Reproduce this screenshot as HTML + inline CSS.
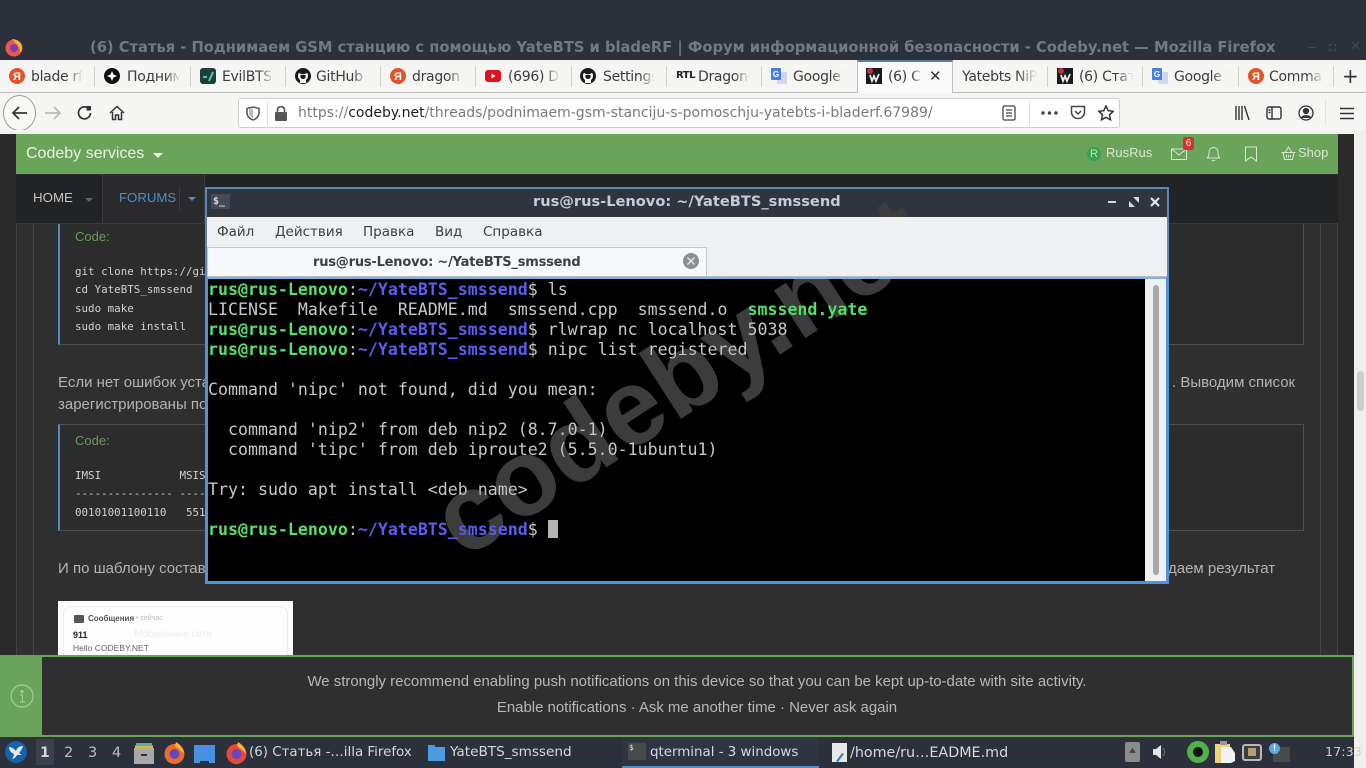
<!DOCTYPE html>
<html lang="ru"><head><meta charset="utf-8"><title>Codeby</title>
<style>
*{box-sizing:border-box}
html,body{margin:0;padding:0;width:1366px;height:768px;overflow:hidden;background:#2f343f}
body{position:relative;font-family:"DejaVu Sans","Noto Sans CJK SC",sans-serif}
.a,.t,.tab,svg.i{position:absolute}
.t{white-space:nowrap;line-height:1}
.ar{font-family:"Liberation Sans","Noto Sans CJK SC",sans-serif}
.tab{top:68px;height:18px;line-height:18px;font-size:14px;letter-spacing:-.3px;color:#3b3b3b;white-space:nowrap;overflow:hidden;-webkit-mask-image:linear-gradient(90deg,#000 70%,transparent)}
.sep{position:absolute;top:66px;width:1px;height:21px;background:#cfcfcd}
.fav{position:absolute;top:68px;width:16px;height:16px}
.mono{font-family:"DejaVu Sans Mono",monospace}
.code{font-size:10.85px;color:#d2d2d2}
.p{font-size:15px;color:#b4b4b4}
.term{position:absolute;left:208px;font:16.6px/20px "DejaVu Sans Mono",monospace;color:#c8c8c8;white-space:pre;height:20px}
.g{color:#55e06a;font-weight:bold}.b{color:#5c5cf0;font-weight:bold}
.mn{top:226px;font-size:13.5px;color:#3a3e46}
.tb{top:746px;font-size:14.5px;color:#d3dae3}
</style></head><body>

<!-- Firefox titlebar -->
<div class="a" style="left:0;top:0;width:1366px;height:60px;background:#2b303b"></div>
<svg class="i" style="left:4px;top:37px" width="20" height="20" viewBox="0 0 20 20"><circle cx="10" cy="11" r="8.500" fill="#e85a50"/><path d="M8 2c4 0 10 3 10 9 0 2-1 4-2 5 1-6-4-9-8-14z" fill="#f9b233"/><circle cx="10" cy="11" r="4" fill="#7b3fa8"/></svg>
<div class="t" style="left:90px;top:41px;font-size:14.7px;font-weight:bold;color:#737883" id="ti">(6) Статья - Поднимаем GSM станцию с помощью YateBTS и bladeRF | Форум информационной безопасности - Codeby.net — Mozilla Firefox</div>
<div class="a" style="left:1308px;top:47px;width:8px;height:1px;background:#444953"></div>
<div class="a" style="left:1329px;top:44px;width:7px;height:7px;border:1px dashed #444953"></div>
<div class="t" style="left:1350px;top:40px;font-size:13px;color:#444953">✕</div>

<!-- tab strip -->
<div class="a" style="left:0;top:60px;width:1366px;height:33px;background:#f5f5f4;border-bottom:1px solid #bdbdbb"></div>
<div class="sep" style="left:94px"></div><div class="sep" style="left:190px"></div><div class="sep" style="left:285px"></div><div class="sep" style="left:380px"></div><div class="sep" style="left:475px"></div><div class="sep" style="left:571px"></div><div class="sep" style="left:666px"></div><div class="sep" style="left:761px"></div><div class="sep" style="left:1047px"></div><div class="sep" style="left:1142px"></div><div class="sep" style="left:1238px"></div><div class="sep" style="left:1333px"></div>

<div class="a" style="left:857px;top:60px;width:96px;height:34px;background:#fafafa;border-left:1px solid #bdbdbb;border-right:1px solid #bdbdbb;border-top:2px solid #5a7ea8"></div>

<svg class="fav" style="left:9px" viewBox="0 0 16 16"><circle cx="8" cy="8" r="8" fill="#e2552b"/><text x="8" y="12" font-size="11" font-weight="bold" text-anchor="middle" fill="#fff" font-family="Liberation Sans">Я</text></svg>
<svg class="fav" style="left:104px" viewBox="0 0 16 16"><circle cx="8" cy="8" r="8" fill="#111"/><path d="M8 3l1.5 3.5L13 8l-3.500 1.500L8 13 6.500 9.500 3 8l3.500-1.500z" fill="#fff"/></svg>
<svg class="fav" style="left:200px" viewBox="0 0 16 16"><rect width="16" height="16" rx="3" fill="#1e3d3f"/><path d="M3 9h4M9 13l4-9" stroke="#4fd0a0" stroke-width="2"/></svg>
<svg class="fav" style="left:295px" viewBox="0 0 16 16"><circle cx="8" cy="8" r="8" fill="#1b1b1b"/><path d="M5 15v-3c-1-1-2-2-2-4s.500-3 1-3 2 1 2 1h4s1.500-1 2-1 1 1 1 3-1 3-2 4v3z" fill="#f5f5f4"/><path d="M5.500 7.500c0-1 5-1 5 0 .5 2-.5 3.500-2.500 3.500s-3-1.500-2.500-3.500z" fill="#1b1b1b"/></svg>
<svg class="fav" style="left:390px" viewBox="0 0 16 16"><circle cx="8" cy="8" r="8" fill="#e2552b"/><text x="8" y="12" font-size="11" font-weight="bold" text-anchor="middle" fill="#fff" font-family="Liberation Sans">Я</text></svg>
<svg class="fav" style="left:485px" viewBox="0 0 16 16"><rect y="2" width="16" height="12" rx="3" fill="#e0121b"/><path d="M6.500 5.500v5l4-2.500z" fill="#fff"/></svg>
<svg class="fav" style="left:580px" viewBox="0 0 16 16"><circle cx="8" cy="8" r="8" fill="#1b1b1b"/><path d="M5 15v-3c-1-1-2-2-2-4s.500-3 1-3 2 1 2 1h4s1.500-1 2-1 1 1 1 3-1 3-2 4v3z" fill="#f5f5f4"/><path d="M5.500 7.500c0-1 5-1 5 0 .5 2-.5 3.500-2.500 3.500s-3-1.500-2.500-3.500z" fill="#1b1b1b"/></svg>
<div class="t" style="left:676px;top:71px;font-size:10px;font-weight:bold;color:#222;letter-spacing:-.5px">RTL</div>
<svg class="fav" style="left:771px" viewBox="0 0 16 16"><rect x="6" y="4" width="10" height="12" fill="#cfd8e8"/><rect width="10" height="12" rx="1" fill="#4a7ee0"/><text x="5" y="9" font-size="8" font-weight="bold" text-anchor="middle" fill="#fff" font-family="Liberation Sans">G</text></svg>
<svg class="fav" style="left:866px" viewBox="0 0 16 16"><rect width="16" height="16" fill="#1a1a1a"/><circle cx="4" cy="3" r="3" fill="#c0333a"/><path d="M4 7l2 6 2-5 2 5 3-7" stroke="#eee" stroke-width="1.800" fill="none"/></svg>
<svg class="fav" style="left:1057px" viewBox="0 0 16 16"><rect width="16" height="16" fill="#1a1a1a"/><circle cx="4" cy="3" r="3" fill="#c0333a"/><path d="M4 7l2 6 2-5 2 5 3-7" stroke="#eee" stroke-width="1.800" fill="none"/></svg>
<svg class="fav" style="left:1152px" viewBox="0 0 16 16"><rect x="6" y="4" width="10" height="12" fill="#cfd8e8"/><rect width="10" height="12" rx="1" fill="#4a7ee0"/><text x="5" y="9" font-size="8" font-weight="bold" text-anchor="middle" fill="#fff" font-family="Liberation Sans">G</text></svg>
<svg class="fav" style="left:1248px" viewBox="0 0 16 16"><circle cx="8" cy="8" r="8" fill="#e2552b"/><text x="8" y="12" font-size="11" font-weight="bold" text-anchor="middle" fill="#fff" font-family="Liberation Sans">Я</text></svg>

<div class="tab" style="left:31px;width:52px">blade rf</div>
<div class="tab" style="left:127px;width:54px">Поднимаем</div>
<div class="tab" style="left:222px;width:52px">EvilBTS -</div>
<div class="tab" style="left:316px;width:52px">GitHub - x</div>
<div class="tab" style="left:412px;width:52px">dragon os</div>
<div class="tab" style="left:508px;width:52px">(696) Dragon</div>
<div class="tab" style="left:603px;width:52px">Settings</div>
<div class="tab" style="left:698px;width:52px">DragonOS</div>
<div class="tab" style="left:793px;width:54px">Google Translate</div>
<div class="tab" style="left:888px;width:34px">(6) Статья</div>
<div class="t" style="left:929px;top:69px;font-size:15px;color:#333">✕</div>
<div class="tab" style="left:962px;width:76px">Yatebts NiPC</div>
<div class="tab" style="left:1079px;width:54px">(6) Статья</div>
<div class="tab" style="left:1174px;width:54px">Google Translate</div>
<div class="tab" style="left:1269px;width:54px">Command</div>
<div class="t" style="left:1342px;top:66px;font-size:20px;color:#333">+</div>

<!-- nav bar -->
<div class="a" style="left:0;top:93px;width:1366px;height:37px;background:#f5f5f4"></div>
<div class="a" style="left:3px;top:95px;width:33px;height:36px;border:1px solid #9a9a9a;border-radius:50%;background:#f8f8f7"></div>
<svg class="i" style="left:11px;top:105px" width="18" height="16" viewBox="0 0 18 16" fill="none" stroke="#333" stroke-width="1.700"><path d="M16 8H2M8 2L2 8l6 6"/></svg>
<svg class="i" style="left:44px;top:105px" width="18" height="16" viewBox="0 0 18 16" fill="none" stroke="#b8b8b6" stroke-width="1.700"><path d="M1 8h15M10 2l6 6-6 6"/></svg>
<svg class="i" style="left:77px;top:105px" width="16" height="16" viewBox="0 0 16 16" fill="none" stroke="#333" stroke-width="1.700"><path d="M13.500 8A6 6 0 1 1 11 3"/><path d="M9.500 1h4.500v4.500H9.500z" fill="#333" stroke="none"/></svg>
<svg class="i" style="left:109px;top:105px" width="16" height="16" viewBox="0 0 16 16" fill="none" stroke="#333" stroke-width="1.500"><path d="M1 8l7-6.500L15 8M3.500 7v7.500h3V10h3v4.500h3V7"/></svg>
<div class="a" style="left:238px;top:98px;width:882px;height:30px;background:#fff;border:1px solid #cfcfcd;border-radius:3px"></div>
<svg class="i" style="left:246px;top:106px" width="14" height="15" viewBox="0 0 14 15" fill="none" stroke="#555" stroke-width="1.500"><path d="M1 2.500L7 1l6 1.500V7c0 3.500-3 6-6 7-3-1-6-3.500-6-7z"/><path d="M7 2.500V12.500C5 11.500 3 9.500 3 7V3.500z" fill="#555" stroke="none" opacity=".4"/></svg>
<div class="a" style="left:267px;top:101px;width:1px;height:24px;background:#dcdcda"></div>
<svg class="i" style="left:275px;top:106px" width="12" height="15" viewBox="0 0 12 15"><rect y="6" width="12" height="9" rx="1" fill="#555"/><path d="M2.500 7V4a3.500 3.500 0 0 1 7 0v3" stroke="#555" stroke-width="1.700" fill="none"/></svg>
<div class="t" id="url" style="left:298px;top:106px;font-size:14px;color:#7a7a7a"><span>https://</span><span style="color:#1d1d1d">codeby.net</span><span>/threads/podnimaem-gsm-stanciju-s-pomoschju-yatebts-i-bladerf.67989/</span></div>
<svg class="i" style="left:1002px;top:105px" width="14" height="16" viewBox="0 0 14 16" fill="none" stroke="#444" stroke-width="1.300"><rect x="1" y="1" width="12" height="14" rx="1.500"/><path d="M4 5h6M4 8h6M4 11h6"/></svg>
<div class="a" style="left:1029px;top:101px;width:1px;height:24px;background:#dcdcda"></div>
<svg class="i" style="left:1041px;top:111px" width="17" height="4" viewBox="0 0 17 4" fill="#444"><circle cx="2" cy="2" r="1.700"/><circle cx="8.500" cy="2" r="1.700"/><circle cx="15" cy="2" r="1.700"/></svg>
<svg class="i" style="left:1070px;top:105px" width="16" height="15" viewBox="0 0 16 15" fill="none" stroke="#444" stroke-width="1.500"><path d="M1.500 1.500h13V7a6.500 6.500 0 0 1-13 0z"/><path d="M5 6l3 3 3-3"/></svg>
<svg class="i" style="left:1098px;top:105px" width="16" height="16" viewBox="0 0 16 16" fill="none" stroke="#333" stroke-width="1.500"><path d="M8 1l2.200 4.700 5 .6-3.700 3.500 1 5L8 12.300 3.500 14.800l1-5L.8 6.300l5-.6z"/></svg>
<svg class="i" style="left:1234px;top:105px" width="16" height="16" viewBox="0 0 16 16" fill="none" stroke="#333" stroke-width="1.400"><path d="M2 1v14M5 1v14M8 1v14M10.500 1l4.500 14"/></svg>
<svg class="i" style="left:1266px;top:106px" width="16" height="14" viewBox="0 0 16 14" fill="none" stroke="#333" stroke-width="1.400"><rect x="1" y="1" width="14" height="12" rx="2"/><path d="M6 1v12"/><path d="M2.500 4h2M2.500 6.500h2" /></svg>
<svg class="i" style="left:1298px;top:105px" width="16" height="16" viewBox="0 0 16 16" fill="none" stroke="#333" stroke-width="1.300"><circle cx="8" cy="8" r="7"/><circle cx="8" cy="6" r="2.500" fill="#333"/><path d="M3.500 13c1-3 8-3 9 0" fill="#333"/></svg>
<div class="a" style="left:1325px;top:99px;width:1px;height:27px;background:#e3e3e1"></div>
<svg class="i" style="left:1340px;top:107px" width="14" height="13" viewBox="0 0 14 13" stroke="#333" stroke-width="1.600"><path d="M0 1.500h14M0 6.500h14M0 11.500h14"/></svg>

<!-- page -->
<div class="a" style="left:0;top:130px;width:1354px;height:607px;background:#2f2f2f"></div>
<div class="a" style="left:0;top:130px;width:1366px;height:4px;background:#f5f3ef"></div>
<div class="a" style="left:1354px;top:130px;width:12px;height:638px;background:#f1efeb"></div>
<div class="a" style="left:1357px;top:371px;width:7px;height:40px;background:#cfcdc9;border-radius:4px"></div>
<div class="a" style="left:0;top:134px;width:16px;height:522px;background:#2a2a2a"></div>
<div class="a" style="left:1338px;top:134px;width:16px;height:522px;background:#2a2a2a"></div>
<div class="a" style="left:16px;top:223px;width:1px;height:433px;background:#444"></div>
<div class="a" style="left:33px;top:223px;width:1px;height:433px;background:#464646"></div>
<div class="a" style="left:1320px;top:223px;width:1px;height:433px;background:#464646"></div>
<div class="a" style="left:1337px;top:223px;width:1px;height:433px;background:#444"></div>
<div class="a" style="left:16px;top:134px;width:1322px;height:40px;background:#6aa35a"></div>
<div class="t ar" style="left:26px;top:146px;font-size:16px;color:#eaf3e6">Codeby services</div>
<div class="a" style="left:153px;top:153px;border:5px solid transparent;border-top:5px solid #eaf3e6;border-bottom:0"></div>
<div class="a ar" style="left:1087px;top:147px;width:14px;height:14px;border-radius:50%;background:#3f9e52;color:#a6f0b4;font-size:11px;line-height:14px;text-align:center">R</div>
<div class="t ar" style="left:1106px;top:146px;font-size:13px;color:#d9e9d3">RusRus</div>
<svg class="i" style="left:1171px;top:147px" width="17" height="14" viewBox="0 0 17 14" fill="none" stroke="#dbe9d5" stroke-width="1"><rect x=".5" y="2" width="15" height="10.500"/><path d="M.5 2L8 8l7.500-6"/></svg>
<div class="a ar" style="left:1183px;top:137px;width:11px;height:13px;background:#d13333;border-radius:2px;color:#f3d9d9;font-size:10px;line-height:13px;text-align:center">6</div>
<svg class="i" style="left:1206px;top:145px" width="15" height="17" viewBox="0 0 15 17" fill="none" stroke="#dbe9d5" stroke-width="1"><path d="M1 13c2-1 2-4 2-6a4.500 4.500 0 0 1 9 0c0 2 0 5 2 6zM6 15c.5 1 2.500 1 3 0"/></svg>
<svg class="i" style="left:1244px;top:146px" width="14" height="16" viewBox="0 0 14 16" fill="none" stroke="#dbe9d5" stroke-width="1"><path d="M1.500 1h11v14L7 11l-5.500 4z"/></svg>
<svg class="i" style="left:1281px;top:146px" width="15" height="15" viewBox="0 0 15 15" fill="none" stroke="#dbe9d5" stroke-width="1"><path d="M.5 6.500h14M2 6.500l1.500 7h8l1.500-7M4 6.500L7.500 1 11 6.500M5.500 9v2.500M7.500 9v2.500M9.500 9v2.500"/></svg>
<div class="t ar" style="left:1298px;top:146px;font-size:13px;color:#d9e9d3">Shop</div>

<!-- site nav -->
<div class="a" style="left:16px;top:174px;width:1322px;height:50px;background:#222325;border-bottom:1px solid #3a3a3a;border-top:1px solid #2f2f2f"></div>
<div class="a" style="left:102px;top:175px;width:103px;height:48px;background:#2a2a2c;border-left:1px solid #3c3c3c;border-right:1px solid #3c3c3c"></div>
<div class="t ar" style="left:33px;top:191px;font-size:13.3px;color:#c4c4c4">HOME</div>
<div class="a" style="left:85px;top:198px;border:4px solid transparent;border-top:4px solid #666;border-bottom:0"></div>
<div class="t ar" style="left:119px;top:191px;font-size:13.2px;color:#4f8ec4">FORUMS</div>
<div class="a" style="left:179px;top:187px;width:1px;height:24px;background:#3c3c3c"></div>
<div class="a" style="left:188px;top:197px;border:4px solid transparent;border-top:4px solid #4f8ec4;border-bottom:0"></div>

<!-- blocks -->
<div class="a" style="left:58px;top:224px;width:1246px;height:121px;background:#2c2c2c;border:1px solid #505050;border-top:0;border-left:2px solid #4f8ec4"></div>
<div class="t ar" style="left:75px;top:230px;font-size:13px;color:#6a9a5c">Code:</div>
<div class="t mono code" style="left:75px;top:267px">git clone https://github.com/</div>
<div class="t mono code" style="left:75px;top:285px">cd YateBTS_smssend</div>
<div class="t mono code" style="left:75px;top:304px">sudo make</div>
<div class="t mono code" style="left:75px;top:322px">sudo make install</div>
<div class="t ar p" style="left:58px;top:375px">Если нет ошибок установки</div>
<div class="t ar p" style="left:1172px;top:375px">. Выводим список</div>
<div class="t ar p" style="left:58px;top:397px">зарегистрированы пользователи</div>
<div class="a" style="left:58px;top:424px;width:1246px;height:107px;background:#2c2c2c;border:1px solid #505050;border-left:2px solid #4f8ec4"></div>
<div class="t ar" style="left:75px;top:434px;font-size:13px;color:#6a9a5c">Code:</div>
<div class="t mono code" style="left:75px;top:471px;white-space:pre">IMSI            MSISDN</div>
<div class="t mono code" style="left:75px;top:489px;white-space:pre">--------------- ------</div>
<div class="t mono code" style="left:75px;top:508px;white-space:pre">00101001100110   55100</div>
<div class="t ar p" style="left:58px;top:561px">И по шаблону составляем</div>
<div class="t ar p" style="left:1168px;top:561px">даем результат</div>

<!-- image -->
<div class="a" style="left:58px;top:601px;width:235px;height:55px;background:#fdfdfd;overflow:hidden">
  <div class="a" style="left:5px;top:5px;width:225px;height:60px;border:1px solid #eaeaea;border-radius:8px"></div>
  <div class="a" style="left:16px;top:14px;width:10px;height:8px;background:#555;border-radius:1px"></div>
  <div class="t ar" style="left:30px;top:14px;font-size:8px;font-weight:bold;color:#555">Сообщения</div>
  <div class="t ar" style="left:78px;top:14px;font-size:7px;color:#bbb">• сейчас</div>
  <div class="t ar" style="left:76px;top:29px;font-size:10px;color:#eee">Мобильные сети</div>
  <div class="t ar" style="left:15px;top:30px;font-size:9px;font-weight:bold;color:#222">911</div>
  <div class="t ar" style="left:15px;top:43px;font-size:8.500px;color:#666">Hello CODEBY.NET</div>
</div>

<!-- notification -->
<div class="a" style="left:0;top:655px;width:1354px;height:82px;background:#2f2f2f;border:2px solid #6aa35a"></div>
<div class="a" style="left:0;top:655px;width:42px;height:82px;background:#6aa35a"></div>
<svg class="i" style="left:10px;top:684px" width="24" height="24" viewBox="0 0 24 24" fill="none" stroke="#a5cd99" stroke-width="1.200"><circle cx="12" cy="12" r="11"/><circle cx="12" cy="7.500" r="1" fill="#a5cd99"/><path d="M10 11h2.500v7M10 18h5"/></svg>
<div class="t ar" style="left:0;width:1394px;text-align:center;top:675px;font-size:14.95px;color:#b8b8b8">We strongly recommend enabling push notifications on this device so that you can be kept up-to-date with site activity.</div>
<div class="t ar" style="left:0;width:1394px;text-align:center;top:701px;font-size:14.95px;color:#b8b8b8">Enable notifications · Ask me another time · Never ask again</div>

<!-- terminal window -->
<div class="a" style="left:205px;top:187px;width:964px;height:397px;background:#eff0f2;border:2px solid #5a86b8"></div>
<div class="a" style="left:207px;top:189px;width:960px;height:28px;background:#2f343f"></div>
<div class="a mono" style="left:211px;top:194px;width:19px;height:15px;background:#444a55;color:#d3dae3;font-size:10px;line-height:15px;padding-left:2px;font-weight:bold">$_</div>
<div class="t" style="left:533px;top:195px;font-size:14.6px;font-weight:bold;color:#c5ccd6">rus@rus-Lenovo: ~/YateBTS_smssend</div>
<div class="a" style="left:1108px;top:201px;width:8px;height:2px;background:#d3dae3"></div>
<svg class="i" style="left:1129px;top:197px" width="10" height="10" viewBox="0 0 10 10" fill="#d3dae3"><path d="M10 0v6L4 0zM0 10V4l6 6z"/></svg>
<svg class="i" style="left:1150px;top:197px" width="10" height="10" viewBox="0 0 10 10" stroke="#e4e8ee" stroke-width="2.200"><path d="M1 1l8 8M9 1l-8 8"/></svg>
<div class="t mn" style="left:217px">Файл</div><div class="t mn" style="left:275px">Действия</div><div class="t mn" style="left:363px">Правка</div><div class="t mn" style="left:435px">Вид</div><div class="t mn" style="left:483px">Справка</div>
<div class="a" style="left:207px;top:247px;width:500px;height:30px;background:#f7f8f9;border:1px solid #c6c9cc;border-bottom:0"></div>
<div class="a" style="left:207px;top:276px;width:960px;height:1px;background:#b8bcc0"></div>
<div class="t" style="left:313px;top:256px;font-size:13px;font-weight:bold;color:#3a3e46;letter-spacing:-.2px">rus@rus-Lenovo: ~/YateBTS_smssend</div>
<div class="a" style="left:683px;top:253px;width:16px;height:16px;border-radius:50%;background:#8a8d92"></div>
<svg class="i" style="left:687px;top:257px" width="8" height="8" viewBox="0 0 8 8" stroke="#f0f0f0" stroke-width="1.300"><path d="M.5.5l7 7M7.500.5l-7 7"/></svg>

<div class="a" style="left:205px;top:277px;width:964px;height:2px;background:#7fb2e6"></div>
<div class="a" style="left:208px;top:279px;width:937px;height:302px;background:#000"></div>
<div class="a" style="left:1145px;top:279px;width:21px;height:302px;background:#eff1f2"></div>
<div class="a" style="left:1153px;top:285px;width:6px;height:290px;background:#a9a9a9;border-radius:3px"></div>
<div class="a" style="left:205px;top:277px;width:3px;height:307px;background:#4f94d8"></div>
<div class="a" style="left:1166px;top:277px;width:3px;height:307px;background:#4f94d8"></div>
<div class="a" style="left:205px;top:581px;width:964px;height:3px;background:#4f94d8"></div>

<div class="term" style="top:280px"><span class="g">rus@rus-Lenovo</span>:<span class="b">~/YateBTS_smssend</span>$ ls</div>
<div class="term" style="top:300px">LICENSE  Makefile  README.md  smssend.cpp  smssend.o  <span class="g">smssend.yate</span></div>
<div class="term" style="top:320px"><span class="g">rus@rus-Lenovo</span>:<span class="b">~/YateBTS_smssend</span>$ rlwrap nc localhost 5038</div>
<div class="term" style="top:340px"><span class="g">rus@rus-Lenovo</span>:<span class="b">~/YateBTS_smssend</span>$ nipc list registered</div>
<div class="term" style="top:380px">Command 'nipc' not found, did you mean:</div>
<div class="term" style="top:420px">  command 'nip2' from deb nip2 (8.7.0-1)</div>
<div class="term" style="top:440px">  command 'tipc' from deb iproute2 (5.5.0-1ubuntu1)</div>
<div class="term" style="top:480px">Try: sudo apt install &lt;deb name&gt;</div>
<div class="term" style="top:520px"><span class="g">rus@rus-Lenovo</span>:<span class="b">~/YateBTS_smssend</span>$ </div>
<div class="a" style="left:548px;top:520px;width:10px;height:18px;background:#b2b2b2"></div>

<!-- watermark -->
<div class="t ar" style="left:398px;top:322px;font-size:108px;font-weight:bold;color:#3c3c3c;mix-blend-mode:lighten;transform:rotate(-33deg);transform-origin:50% 50%">codeby.net</div>

<!-- taskbar -->
<div class="a" style="left:0;top:737px;width:1354px;height:31px;background:#2b303b"></div>
<svg class="i" style="left:5px;top:741px" width="22" height="22" viewBox="0 0 22 22"><circle cx="11" cy="11" r="11" fill="#1662a8"/><path d="M4 6c3 0 5 2 7 4 1-3 3-5 7-5-1 3-2 5-4 7l3 2-5 0c-1 2-3 4-5 4 1-2 2-3 2-5C6 12 4 9 4 6z" fill="#dfeaf4"/></svg>
<div class="a" style="left:36px;top:739px;width:18px;height:26px;background:#3a404c"></div>
<div class="t" style="left:40px;top:746px;font-size:14px;font-weight:bold;color:#d3dae3">1</div>
<div class="t tb" style="left:64px;color:#b8bfca">2</div><div class="t tb" style="left:88px;color:#b8bfca">3</div><div class="t tb" style="left:112px;color:#b8bfca">4</div>
<svg class="i" style="left:134px;top:742px" width="20" height="22" viewBox="0 0 20 22"><rect y="6" width="20" height="16" fill="#a9a9a9"/><rect x="1" y="3.500" width="18" height="3" fill="#d9b64e"/><rect x="2" y="1" width="16" height="3" fill="#53b0a6"/><rect x="7" y="12" width="6" height="2" fill="#333"/></svg>
<svg class="i" style="left:164px;top:741px" width="21" height="23" viewBox="0 0 21 23"><circle cx="10.500" cy="13" r="10" fill="#ef6b2c"/><path d="M12 1c5 3 8 7 8 12-3-4-6-5-9-8z" fill="#f9b233"/><circle cx="10.500" cy="13" r="5" fill="#6b46b8"/></svg>
<svg class="i" style="left:194px;top:745px" width="21" height="18" viewBox="0 0 21 18"><path d="M0 0h21v18H15v-2H6v2H0z" fill="#4a90e2"/></svg>
<svg class="i" style="left:226px;top:741px" width="21" height="23" viewBox="0 0 21 23"><circle cx="10.500" cy="13" r="10" fill="#e8473c"/><path d="M12 1c5 3 8 7 8 12-3-4-6-5-9-8z" fill="#f9b233"/><circle cx="10.500" cy="13" r="5" fill="#6b46b8"/></svg>
<div class="t tb" style="left:249px;font-size:13.4px">(6) Статья -…illa Firefox</div>
<svg class="i" style="left:428px;top:745px" width="17" height="16" viewBox="0 0 17 16"><path d="M0 0h7v2h10v14H0z" fill="#4a9be0"/></svg>
<div class="t tb" style="left:450px;font-size:13.6px">YateBTS_smssend</div>
<div class="a" style="left:622px;top:737px;width:197px;height:31px;background:#2e3440;border-bottom:2px solid #5a8ac0"></div>
<div class="a" style="left:628px;top:743px;width:18px;height:17px;background:#4a4a4a;color:#ddd;font:8px/10px 'DejaVu Sans Mono';padding-left:1px">$</div>
<div class="t tb" style="left:650px;font-size:13.4px">qterminal - 3 windows</div>
<svg class="i" style="left:832px;top:743px" width="16" height="20" viewBox="0 0 16 20"><rect width="15" height="19" fill="#e8e8e8"/><path d="M4 18l6-8 2 1-6 8z" fill="#3c7ec0"/></svg>
<div class="t tb" style="left:850px;font-size:14.3px">/home/ru…EADME.md</div>
<div class="a" style="left:1125px;top:742px;width:15px;height:20px;background:#8c8c8c;border-radius:2px"></div>
<div class="a" style="left:1129px;top:748px;width:7px;height:7px;background:#444;clip-path:polygon(50% 0,100% 70%,0 70%)"></div>
<svg class="i" style="left:1153px;top:745px" width="15" height="14" viewBox="0 0 15 14"><path d="M0 4h3l5-4v14l-5-4H0z" fill="#e4e4e4"/><path d="M10 3c2 2 2 6 0 8" stroke="#666" fill="none" stroke-width="1.200"/></svg>
<div class="a" style="left:1187px;top:741px;width:22px;height:22px;border-radius:50%;background:#4fb04c;border:5px solid #4fb04c"></div>
<div class="a" style="left:1193px;top:747px;width:10px;height:10px;border-radius:50%;background:#111"></div>
<svg class="i" style="left:1215px;top:741px" width="20" height="23" viewBox="0 0 20 23"><rect y="3" width="15" height="19" fill="#eed279"/><rect x="5" y="0" width="7" height="4" fill="#999"/><path d="M6 6h10l4 6v8l-4 2H6z" fill="#f3f3f3"/></svg>
<svg class="i" style="left:1242px;top:744px" width="20" height="17" viewBox="0 0 20 17"><rect x="1" y="1" width="18" height="15" rx="2" fill="#3e3e3e" stroke="#b9b9b9" stroke-width="2"/><rect x="6" y="4" width="8" height="8" fill="#b99e74"/></svg>
<div class="a" style="left:1273px;top:747px;width:17px;height:15px;background:#4a4a4a"></div>
<div class="a ar" style="left:1269px;top:743px;width:11px;height:11px;border-radius:50%;background:#55a9ea;color:#fff;font-size:9px;font-weight:bold;line-height:11px;text-align:center">!</div>
<div class="t" style="left:1325px;top:747px;font-size:12.800px;color:#c9d0da">17:33</div>
</body></html>
